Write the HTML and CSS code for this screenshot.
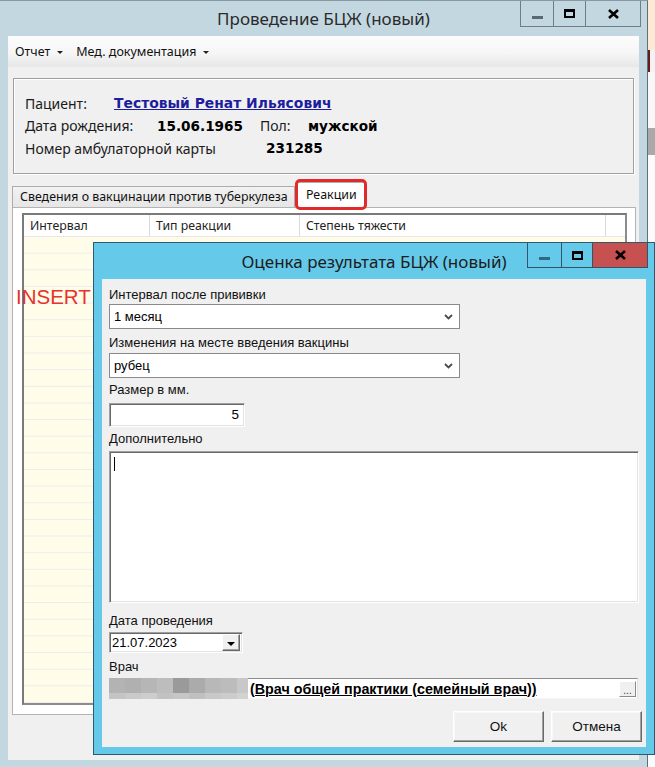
FILE: index.html
```html
<!DOCTYPE html>
<html lang="ru">
<head>
<meta charset="utf-8">
<title>Проведение БЦЖ (новый)</title>
<link rel="stylesheet" href="styles.css">
</head>
<body>
<div class="screen">
  <div class="win">
    <div class="win-title">
      <div class="caption">Проведение БЦЖ (новый)</div>
      <div class="caption-btns">
        <div class="cbtn cbtn-min"><span class="g-min"></span></div>
        <div class="cbtn cbtn-max"><span class="g-max"></span></div>
        <div class="cbtn cbtn-close"><svg width="11" height="10" viewBox="0 0 11 10"><path d="M1 1 L10 9 M10 1 L1 9" stroke="#000" stroke-width="2.6" fill="none"/></svg></div>
      </div>
    </div>
    <div class="win-client">
      <div class="menubar">
        <span class="menu-item">Отчет<span class="tri"></span></span>
        <span class="menu-item">Мед. документация<span class="tri"></span></span>
      </div>
      <div class="patient">
        <div class="prow">
          <span class="plbl w-pat">Пациент:</span>
          <span class="pval link">Тестовый Ренат Ильясович</span>
        </div>
        <div class="prow">
          <span class="plbl w-dob">Дата рождения:</span>
          <span class="pval w-date">15.06.1965</span>
          <span class="plbl w-sex">Пол:</span>
          <span class="pval">мужской</span>
        </div>
        <div class="prow">
          <span class="plbl w-card">Номер амбулаторной карты</span>
          <span class="pval">231285</span>
        </div>
      </div>
      <div class="tabs">
        <div class="tab">Сведения о вакцинации против туберкулеза</div>
        <div class="tab tab-active">Реакции</div>
      </div>
      <div class="tab-panel">
        <div class="grid">
          <div class="grid-head">
            <div class="gh c1">Интервал</div>
            <div class="gh c2">Тип реакции</div>
            <div class="gh c3">Степень тяжести</div>
            <div class="gh c4"></div>
          </div>
          <div class="grid-body"></div>
        </div>
      </div>
    </div>
  </div>
  <div class="side-strip">
    <div class="ss-peach"></div>
    <div class="ss-mark"></div>
    <div class="ss-light"></div>
    <div class="ss-gray"></div>
    <div class="ss-rest"></div>
  </div>

  <div class="insert-label">INSERT</div>

  <div class="dialog">
    <div class="dlg-title">
      <div class="caption dlg-caption">Оценка результата БЦЖ (новый)</div>
      <div class="caption-btns dlg-btns">
        <div class="cbtn cbtn-min"><span class="g-min"></span></div>
        <div class="cbtn cbtn-max"><span class="g-max"></span></div>
        <div class="cbtn cbtn-close"><svg width="11" height="10" viewBox="0 0 11 10"><path d="M1 1 L10 9 M10 1 L1 9" stroke="#000" stroke-width="2.6" fill="none"/></svg></div>
      </div>
    </div>
    <div class="dlg-client">
      <div class="lbl">Интервал после прививки</div>
      <div class="combo sp-1">
        <span class="combo-text">1 месяц</span>
        <svg class="chev" width="9" height="6" viewBox="0 0 9 6"><path d="M1 1 L4.5 4.5 L8 1" stroke="#4a4a4a" stroke-width="1.8" fill="none"/></svg>
      </div>
      <div class="lbl sp-6">Изменения на месте введения вакцины</div>
      <div class="combo sp-2">
        <span class="combo-text">рубец</span>
        <svg class="chev" width="9" height="6" viewBox="0 0 9 6"><path d="M1 1 L4.5 4.5 L8 1" stroke="#4a4a4a" stroke-width="1.8" fill="none"/></svg>
      </div>
      <div class="lbl sp-4">Размер в мм.</div>
      <div class="num sp-5">5</div>
      <div class="lbl sp-4">Дополнительно</div>
      <div class="memo sp-4"><span class="caret-line"></span></div>
      <div class="lbl sp-10">Дата проведения</div>
      <div class="datepick sp-3">
        <span class="date-text">21.07.2023</span>
        <span class="drop-btn"><span class="drop-tri"></span></span>
      </div>
      <div class="lbl sp-6">Врач</div>
      <div class="doctor sp-3">
        <div class="mosaic">
          <span></span><span></span><span></span><span></span><span></span><span></span><span></span><span></span><span></span>
          <span></span><span></span><span></span><span></span><span></span><span></span><span></span><span></span><span></span>
        </div>
        <span class="doc-text">(Врач общей практики (семейный врач))</span>
        <span class="dots-btn">...</span>
      </div>
      <div class="btn-row">
        <div class="btn">Ok</div>
        <div class="btn">Отмена</div>
      </div>
    </div>
  </div>
</div>
</body>
</html>
```

FILE: styles.css
```css
* { box-sizing: border-box; }

html, body {
  margin: 0;
  padding: 0;
  background: #c3d7e0;
}

.screen {
  position: relative;
  width: 655px;
  height: 767px;
  overflow: hidden;
  display: flex;
  font-family: "Noto Sans", "Open Sans", sans-serif;
  color: #000;
}

/* ---------- outer window ---------- */
.win {
  width: 648px;
  height: 767px;
  flex: 0 0 648px;
  background: #c3d7e0;
  border-top: 1px solid #8799a3;
  border-right: 1px solid #5e707a;
  padding: 0 8px;
  display: flex;
  flex-direction: column;
}

.win-title {
  height: 35px;
  flex: 0 0 35px;
  display: grid;
  grid-template-columns: 1fr auto 1fr;
  align-items: start;
}

.caption {
  grid-column: 2;
  font-size: 17px;
  line-height: 20px;
  color: #2b2b2b;
  padding-top: 8px;
  white-space: nowrap;
}

.caption-btns {
  grid-column: 3;
  justify-self: end;
  display: flex;
  margin-right: -2px;
}

.cbtn {
  height: 26px;
  border: 1px solid #6c7e88;
  border-top: none;
  display: flex;
  align-items: center;
  justify-content: center;
  margin-left: -1px;
}
.cbtn-min { width: 34px; }
.cbtn-max { width: 33px; }
.cbtn-close { width: 56px; }

.g-min {
  width: 11px;
  height: 3px;
  background: #5a6a72;
  margin-top: 7px;
}
.g-max {
  width: 11px;
  height: 9px;
  border: 2px solid #000;
  border-top-width: 3px;
}

.win-client {
  height: 724px;
  flex: 0 0 724px;
  background: #f0f0f0;
  display: flex;
  flex-direction: column;
}

.menubar {
  height: 31px;
  flex: 0 0 31px;
  background: linear-gradient(to bottom, #fcfcfc 0%, #f6f6f6 55%, #e7e7e7 100%);
  display: flex;
  align-items: center;
  padding-left: 7px;
  gap: 13px;
  font-size: 12.5px;
  color: #111;
}
.menu-item {
  display: flex;
  align-items: center;
}
.tri {
  width: 0;
  height: 0;
  border-left: 3px solid transparent;
  border-right: 3px solid transparent;
  border-top: 3px solid #222;
  margin-left: 7px;
  margin-top: 1px;
}

/* patient */
.patient {
  margin: 11px 5px 0 5px;
  height: 96px;
  flex: 0 0 96px;
  border: 1px solid #a0a0a0;
  box-shadow: inset 1px 1px 0 #fff, 1px 1px 0 #fff;
  padding: 13px 0 0 11px;
}
.prow {
  display: flex;
  align-items: center;
  height: 22.5px;
}
.plbl {
  font-size: 14px;
  color: #1b1b1b;
  white-space: nowrap;
}
.pval {
  font-family: "DejaVu Sans", "Liberation Sans", sans-serif;
  font-weight: bold;
  font-size: 13.6px;
  color: #000;
  white-space: nowrap;
}
.pval.link {
  color: #1d1d9e;
  text-decoration: underline;
  font-size: 13.9px;
}
.w-pat { width: 89px; }
.w-dob { width: 132px; }
.w-date { width: 103px; }
.w-sex { width: 48px; }
.w-card { width: 241px; }

/* tabs */
.tabs {
  margin: 8px 0 0 4px;
  height: 25px;
  flex: 0 0 25px;
  display: flex;
  align-items: flex-end;
  position: relative;
  z-index: 2;
}
.tab {
  height: 21px;
  width: 283px;
  border: 1px solid #acacac;
  border-bottom: none;
  background: linear-gradient(to bottom, #f2f2f2, #e6e6e6);
  font-size: 12.4px;
  line-height: 19px;
  padding-left: 7px;
  white-space: nowrap;
  color: #111;
}
.tab-active {
  position: relative;
  width: 70px;
  height: 26px;
  margin-left: 1px;
  margin-bottom: -1px;
  background: #fff;
  padding-left: 9px;
  line-height: 24px;
}
.tab-active::after {
  content: "";
  position: absolute;
  left: -2px;
  right: -2px;
  top: -4px;
  bottom: -2px;
  border: 3px solid #e22a2a;
  border-radius: 5px;
}

.tab-panel {
  margin: 0 3px 0 4px;
  height: 508px;
  flex: 0 0 508px;
  border: 1px solid #b4b4b4;
  background: #fff;
  padding: 5px 8px 9px 9px;
  display: flex;
}
.grid {
  flex: 1;
  border: 2px solid #8c8c8c;
  border-top-color: #7a7a7a;
  border-left-color: #7a7a7a;
  background: #fffde9;
  display: flex;
  flex-direction: column;
}
.grid-head {
  height: 22px;
  flex: 0 0 22px;
  display: flex;
  background: #fff;
  border-bottom: 1px solid #e6e6e6;
  font-size: 12.3px;
  color: #222;
}
.gh {
  border-right: 1px solid #dadada;
  line-height: 21px;
  padding-left: 6px;
  white-space: nowrap;
}
.c1 { width: 126px; }
.c2 { width: 150px; }
.c3 { width: 306px; }
.c4 { flex: 1; border-right: none; }
.grid-body {
  flex: 1;
  background-image: linear-gradient(to bottom, transparent 0, transparent 15.6px, #ececec 15.6px, #ececec 16.65px);
  background-size: 100% 16.65px;
}

/* right strip */
.side-strip {
  flex: 1;
  display: flex;
  flex-direction: column;
}
.ss-peach { height: 50px; background: #fdead4; }
.ss-mark { height: 22px; background: #f3f3f3; border-left: 2px solid #6b1a1a; }
.ss-light { height: 56px; background: #f8f8f8; }
.ss-gray { height: 27px; background: #a9a9a9; }
.ss-rest { flex: 1; background: #fbfbfb; }

/* overlay label */
.insert-label {
  position: absolute;
  left: 16px;
  top: 285px;
  font-family: "Liberation Sans", Arial, sans-serif;
  font-size: 20.5px;
  line-height: 24px;
  color: #e8322a;
  z-index: 3;
}

/* ---------- dialog ---------- */
.dialog {
  position: absolute;
  left: 93px;
  top: 242px;
  width: 562px;
  height: 513px;
  background: #65c9ea;
  border: 1px solid #2d5a6c;
  display: flex;
  flex-direction: column;
  z-index: 5;
}
.dlg-title {
  height: 36px;
  flex: 0 0 36px;
  display: grid;
  grid-template-columns: 1fr auto 1fr;
  align-items: start;
}
.dlg-caption {
  color: #1c1c1c;
  padding-top: 9px;
}
.dlg-btns { margin-right: 6px; }
.dlg-btns .cbtn {
  height: 25px;
  border-color: #2f5566;
}
.dlg-btns .g-min { background: #2b6b84; margin-top: 6px; }
.dlg-btns .cbtn-min { width: 35px; }
.dlg-btns .cbtn-max { width: 32px; }
.dlg-btns .cbtn-close { width: 56px; background: #c75050; }

.dlg-client {
  flex: 1;
  margin: 0 8px 7px 8px;
  background: #f0f0f0;
  padding: 8px 4px 5px 7px;
  display: flex;
  flex-direction: column;
  align-items: flex-start;
  font-family: "Liberation Sans", Arial, sans-serif;
  font-size: 13px;
  color: #000;
}

.lbl {
  height: 16px;
  line-height: 16px;
  color: #111;
  white-space: nowrap;
}
.sp-1 { margin-top: 1px; }
.sp-2 { margin-top: 2px; }
.sp-3 { margin-top: 3px; }
.sp-4 { margin-top: 4px; }
.sp-5 { margin-top: 5px; }
.sp-6 { margin-top: 6px; }
.sp-10 { margin-top: 10px; }

.combo {
  width: 351px;
  height: 25px;
  border: 1px solid #8a8a8a;
  background: #fff;
  display: flex;
  align-items: center;
  justify-content: space-between;
  padding: 0 6px 0 4px;
}
.combo-text { line-height: 16px; }
.chev { display: block; }

.num, .memo, .datepick {
  border: 1px solid;
  border-color: #a0a0a0 #fff #fff #a0a0a0;
  box-shadow: inset 1px 1px 0 #696969, inset -1px -1px 0 #e3e3e3;
  background: #fff;
}
.num {
  width: 136px;
  height: 24px;
  text-align: right;
  padding-right: 5px;
  line-height: 22px;
  font-size: 13.5px;
}
.memo {
  width: 530px;
  height: 152px;
  padding: 5px 0 0 4px;
}
.caret-line {
  display: block;
  width: 1px;
  height: 14px;
  background: #000;
}

.datepick {
  width: 134px;
  height: 21px;
  display: flex;
  align-items: center;
  justify-content: space-between;
  padding: 2px 2px 2px 2px;
}
.date-text { line-height: 16px; }
.drop-btn {
  width: 18px;
  height: 17px;
  background: #f0f0f0;
  border: 1px solid;
  border-color: #fff #696969 #696969 #fff;
  box-shadow: inset -1px -1px 0 #a0a0a0;
  display: flex;
  align-items: center;
  justify-content: center;
}
.drop-tri {
  width: 0;
  height: 0;
  border-left: 4px solid transparent;
  border-right: 4px solid transparent;
  border-top: 4px solid #000;
  margin-top: 2px;
}

.doctor {
  width: 529px;
  height: 21px;
  background: #fff;
  border-top: 1px solid #8c8c8c;
  border-right: 1px solid #e3e3e3;
  border-bottom: 1px solid #f5f5f5;
  display: flex;
  align-items: center;
  position: relative;
}
.mosaic {
  align-self: stretch;
  margin-top: -1px;
  margin-bottom: -1px;
  width: 139px;
  display: grid;
  grid-template-columns: repeat(8, 16px) 11px;
  grid-template-rows: 15px 1fr;
}
.mosaic span:nth-child(1) { background: #b3b3b3; }
.mosaic span:nth-child(2) { background: #b0b0b0; }
.mosaic span:nth-child(3) { background: #b6b6b6; }
.mosaic span:nth-child(4) { background: #bdbdbd; }
.mosaic span:nth-child(5) { background: #9a9a9a; }
.mosaic span:nth-child(6) { background: #ababab; }
.mosaic span:nth-child(7) { background: #b8b8b8; }
.mosaic span:nth-child(8) { background: #bcbcbc; }
.mosaic span:nth-child(9) { background: #c8c8c8; }
.mosaic span:nth-child(10) { background: #c4c4c4; }
.mosaic span:nth-child(11) { background: #c9c9c9; }
.mosaic span:nth-child(12) { background: #cdcdcd; }
.mosaic span:nth-child(13) { background: #c2c2c2; }
.mosaic span:nth-child(14) { background: #c6c6c6; }
.mosaic span:nth-child(15) { background: #c0c0c0; }
.mosaic span:nth-child(16) { background: #c8c8c8; }
.mosaic span:nth-child(17) { background: #cccccc; }
.mosaic span:nth-child(18) { background: #d2d2d2; }

.doc-text {
  margin-left: 2px;
  font-weight: bold;
  font-size: 14.3px;
  text-decoration: underline;
  white-space: nowrap;
  line-height: 16px;
}
.dots-btn {
  margin-left: auto;
  margin-right: 1px;
  width: 17px;
  height: 16px;
  background: #f0f0f0;
  border: 1px solid;
  border-color: #fff #8a8a8a #8a8a8a #fff;
  font-size: 10px;
  line-height: 17px;
  text-align: center;
  color: #333;
}

.btn-row {
  align-self: stretch;
  margin-top: 12px;
  display: flex;
  justify-content: flex-end;
  gap: 7px;
}
.btn {
  width: 91px;
  height: 31px;
  background: #f0f0f0;
  border: 1px solid;
  border-color: #fff #696969 #696969 #fff;
  box-shadow: inset -1px -1px 0 #a0a0a0, inset 1px 1px 0 #f8f8f8;
  display: flex;
  align-items: center;
  justify-content: center;
  font-size: 13.5px;
  color: #111;
}
```
